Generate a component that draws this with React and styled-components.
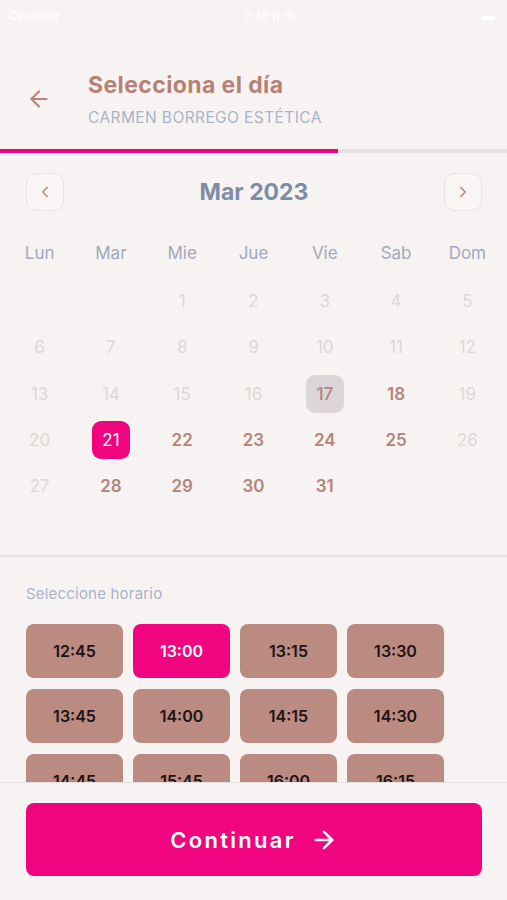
import styled, { createGlobalStyle } from "styled-components";

const GlobalStyle = createGlobalStyle`
  html, body {
    margin: 0;
    padding: 0;
    background: #f7f3f2;
  }
  * {
    box-sizing: border-box;
  }
`;

const Screen = styled.div`
  width: 507px;
  height: 900px;
  display: flex;
  flex-direction: column;
  background: #f7f3f2;
  font-family: "Inter", "Lato", sans-serif;
  overflow: hidden;
`;

const StatusBar = styled.div`
  height: 30px;
  display: flex;
  align-items: center;
  justify-content: space-between;
  padding: 0 12px 0 8px;
  color: #ffffff;
  font-size: 13px;
  font-family: "Liberation Sans", sans-serif;
`;

const Header = styled.div`
  display: flex;
  align-items: flex-start;
  padding: 41px 0 0 26px;
  height: 119px;
`;

const BackButton = styled.button`
  border: none;
  background: none;
  padding: 0;
  margin-top: 15px;
  width: 26px;
  height: 26px;
  color: #b9857a;
  cursor: pointer;
`;

const TitleBlock = styled.div`
  margin-left: 36px;
  display: flex;
  flex-direction: column;
`;

const Title = styled.h1`
  margin: 0;
  font-size: 23px;
  font-weight: 700;
  letter-spacing: 0.4px;
  color: #b98176;
  line-height: 28px;
`;

const Subtitle = styled.div`
  margin-top: 9px;
  font-size: 15.5px;
  letter-spacing: 0.4px;
  color: #a9b4c8;
`;

const Progress = styled.div`
  height: 4px;
  background: #e6e1e0;
  display: flex;
  align-items: flex-start;
`;

const ProgressFill = styled.div`
  height: 4px;
  background: #f0047f;
`;

const Scroll = styled.div`
  flex: 1;
  overflow: hidden;
`;

const MonthNav = styled.div`
  display: flex;
  align-items: center;
  justify-content: space-between;
  padding: 20px 25px 0 26px;
`;

const NavButton = styled.button`
  width: 38px;
  height: 38px;
  border-radius: 10px;
  border: 1px solid #ece4e2;
  background: #f8f5f4;
  color: #b9857a;
  display: flex;
  align-items: center;
  justify-content: center;
  padding: 0;
`;

const MonthLabel = styled.div`
  font-size: 23px;
  font-weight: 700;
  color: #7d8ca8;
`;

const Grid = styled.div`
  display: grid;
  grid-template-columns: repeat(7, 1fr);
  padding: 0 4px;
`;

const WeekDay = styled.div`
  text-align: center;
  font-size: 17px;
  color: #a2a9bd;
  height: 32px;
  line-height: 32px;
  margin-top: 26px;
  margin-bottom: 9px;
`;

const DayCell = styled.div`
  height: 46.3px;
  display: flex;
  align-items: center;
  justify-content: center;
`;

const Day = styled.div`
  width: 38px;
  height: 38px;
  border-radius: 9px;
  display: flex;
  align-items: center;
  justify-content: center;
  font-size: 17px;
  font-weight: ${(p) => (p.$enabled ? 600 : p.$today ? 500 : 400)};
  color: ${(p) =>
    p.$selected
      ? "#ffffff"
      : p.$enabled || p.$today
      ? "#b5847a"
      : "#ded7d6"};
  background: ${(p) =>
    p.$selected ? "#f0047f" : p.$today ? "#ddd6d8" : "transparent"};
`;

const Divider = styled.div`
  height: 2px;
  background: #e6e1e0;
  margin-top: 46px;
`;

const SectionLabel = styled.div`
  padding: 27px 0 0 26px;
  font-size: 15px;
  letter-spacing: 0.2px;
  color: #a9b4c8;
`;

const Slots = styled.div`
  display: grid;
  grid-template-columns: repeat(4, 97px);
  column-gap: 10px;
  row-gap: 11px;
  padding: 21px 0 0 26px;
`;

const Slot = styled.button`
  height: 54px;
  border: none;
  border-radius: 8px;
  background: ${(p) => (p.$active ? "#f0047f" : "#bb8a80")};
  color: ${(p) => (p.$active ? "#ffffff" : "#1c1414")};
  font-family: "Inter", "Lato", sans-serif;
  font-size: 16px;
  font-weight: 600;
  padding: 0;
`;

const Footer = styled.div`
  border-top: 1px solid #e6e1e0;
  padding: 20px 25px 24px 26px;
  background: #f7f3f2;
`;

const ContinueButton = styled.button`
  width: 100%;
  height: 73px;
  border: none;
  border-radius: 8px;
  background: #f0047f;
  color: #ffffff;
  font-family: "Inter", "Lato", sans-serif;
  font-size: 22px;
  font-weight: 600;
  letter-spacing: 2.3px;
  display: flex;
  align-items: center;
  justify-content: center;
  gap: 14px;
`;

const days = [];
for (let i = 0; i < 2; i++) days.push(null);
for (let d = 1; d <= 31; d++) days.push(d);

const slots = [
  "12:45", "13:00", "13:15", "13:30",
  "13:45", "14:00", "14:15", "14:30",
  "14:45", "15:45", "16:00", "16:15",
];

const isOpen = (d) => d >= 18 && ![19, 20, 26, 27].includes(d);

function App() {
  return (
    <Screen>
      <GlobalStyle />
      <StatusBar>
        <span>Operator</span>
        <span>2:46 p.m.</span>
        <span>▬</span>
      </StatusBar>
      <Header>
        <BackButton>
          <svg width="26" height="26" viewBox="0 0 24 24" fill="none" stroke="currentColor" strokeWidth="2" strokeLinecap="round" strokeLinejoin="round">
            <path d="M19 12H5" />
            <path d="M12 19l-7-7 7-7" />
          </svg>
        </BackButton>
        <TitleBlock>
          <Title>Selecciona el día</Title>
          <Subtitle>CARMEN BORREGO ESTÉTICA</Subtitle>
        </TitleBlock>
      </Header>
      <Progress>
        <ProgressFill style={{ width: "338px" }} />
      </Progress>
      <Scroll>
        <MonthNav>
          <NavButton>
            <svg width="18" height="18" viewBox="0 0 24 24" fill="none" stroke="currentColor" strokeWidth="2" strokeLinecap="round" strokeLinejoin="round">
              <path d="M15 18l-6-6 6-6" />
            </svg>
          </NavButton>
          <MonthLabel>Mar 2023</MonthLabel>
          <NavButton>
            <svg width="18" height="18" viewBox="0 0 24 24" fill="none" stroke="currentColor" strokeWidth="2" strokeLinecap="round" strokeLinejoin="round">
              <path d="M9 18l6-6-6-6" />
            </svg>
          </NavButton>
        </MonthNav>
        <Grid>
          {["Lun", "Mar", "Mie", "Jue", "Vie", "Sab", "Dom"].map((w) => (
            <WeekDay key={w}>{w}</WeekDay>
          ))}
          {days.map((d, i) => (
            <DayCell key={i}>
              {d && (
                <Day $enabled={isOpen(d) && d !== 21} $selected={d === 21} $today={d === 17}>
                  {d}
                </Day>
              )}
            </DayCell>
          ))}
        </Grid>
        <Divider />
        <SectionLabel>Seleccione horario</SectionLabel>
        <Slots>
          {slots.map((s) => (
            <Slot key={s} $active={s === "13:00"}>
              {s}
            </Slot>
          ))}
        </Slots>
      </Scroll>
      <Footer>
        <ContinueButton>
          Continuar
          <svg width="28" height="28" viewBox="0 0 24 24" fill="none" stroke="currentColor" strokeWidth="2.2" strokeLinecap="round" strokeLinejoin="round">
            <path d="M5 12h14" />
            <path d="M12 5l7 7-7 7" />
          </svg>
        </ContinueButton>
      </Footer>
    </Screen>
  );
}

export default App;
